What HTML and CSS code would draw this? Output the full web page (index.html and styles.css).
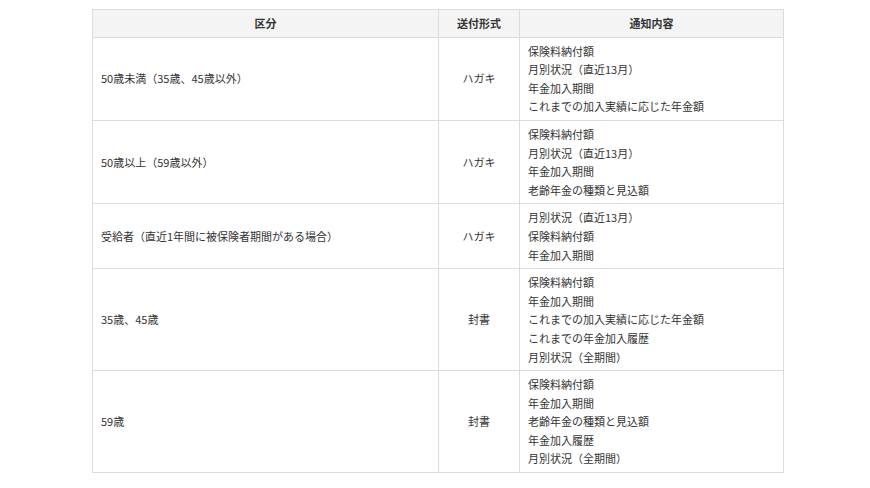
FILE: index.html
```html
<!DOCTYPE html>
<html lang="ja">
<head>
<meta charset="utf-8">
<link rel="stylesheet" href="styles.css">
</head>
<body>
<table class="notice-table">
  <colgroup>
    <col class="col-kind">
    <col class="col-form">
    <col class="col-content">
  </colgroup>
  <thead>
    <tr><th>区分</th><th>送付形式</th><th>通知内容</th></tr>
  </thead>
  <tbody>
    <tr>
      <td>50歳未満（35歳、45歳以外）</td>
      <td class="center">ハガキ</td>
      <td>保険料納付額<br>月別状況（直近13月）<br>年金加入期間<br>これまでの加入実績に応じた年金額</td>
    </tr>
    <tr>
      <td>50歳以上（59歳以外）</td>
      <td class="center">ハガキ</td>
      <td>保険料納付額<br>月別状況（直近13月）<br>年金加入期間<br>老齢年金の種類と見込額</td>
    </tr>
    <tr>
      <td>受給者（直近1年間に被保険者期間がある場合）</td>
      <td class="center">ハガキ</td>
      <td>月別状況（直近13月）<br>保険料納付額<br>年金加入期間</td>
    </tr>
    <tr>
      <td>35歳、45歳</td>
      <td class="center">封書</td>
      <td>保険料納付額<br>年金加入期間<br>これまでの加入実績に応じた年金額<br>これまでの年金加入履歴<br>月別状況（全期間）</td>
    </tr>
    <tr>
      <td>59歳</td>
      <td class="center">封書</td>
      <td>保険料納付額<br>年金加入期間<br>老齢年金の種類と見込額<br>年金加入履歴<br>月別状況（全期間）</td>
    </tr>
  </tbody>
</table>
</body>
</html>
```
FILE: styles.css
```css
html, body {
  margin: 0;
  padding: 0;
  background: #fff;
}
body {
  padding: 9px 0 0 92px;
  font-family: "Noto Sans CJK JP", "Noto Sans", sans-serif;
  font-size: 11px;
  line-height: 18.6px;
  color: #333;
}
.notice-table {
  border-collapse: collapse;
  table-layout: fixed;
  width: 691px;
}
.col-kind { width: 346px; }
.col-form { width: 81px; }
.col-content { width: 264px; }
.notice-table th,
.notice-table td {
  border: 1px solid #dcdcdc;
  padding: 4px 8px;
  vertical-align: middle;
  text-align: left;
  font-weight: normal;
}
.notice-table th {
  background: #f4f4f4;
  text-align: center;
  font-weight: bold;
}
.notice-table td.center {
  text-align: center;
}
```
